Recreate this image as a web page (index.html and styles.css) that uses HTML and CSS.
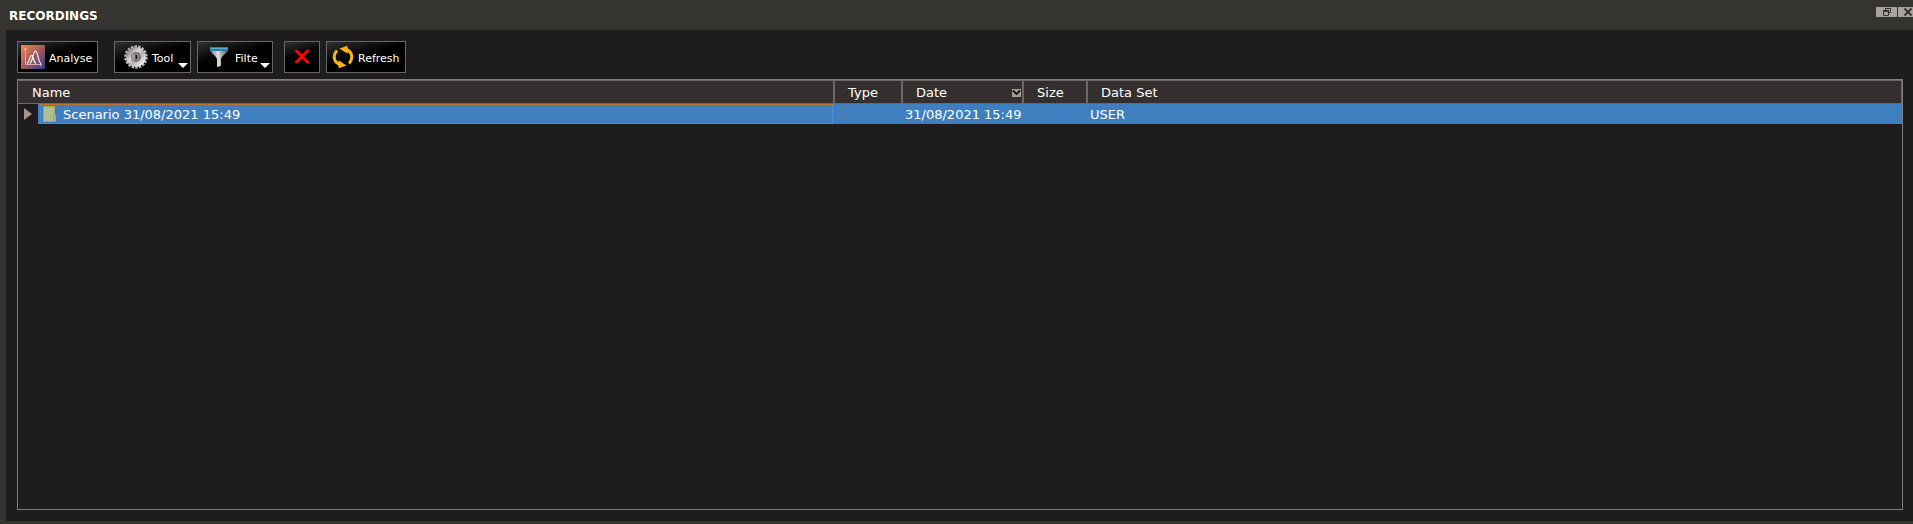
FILE: index.html
```html
<!DOCTYPE html>
<html lang="en">
<head>
<meta charset="utf-8">
<title>Recordings</title>
<link rel="stylesheet" href="styles.css">
</head>
<body>
<section class="dock">
  <header class="titlebar">
    <h1 class="title">RECORDINGS</h1>
    <div class="window-controls">
      <button class="window-btn restore" aria-label="Restore">
        <svg width="21" height="10" viewBox="0 0 21 10"><path d="M9.500 3V1.500h5v4H13" fill="none" stroke="#35322f"/><path d="M9 1h6v1H9z" fill="#35322f"/><path d="M7.500 3.500h5v5h-5z" fill="none" stroke="#35322f"/><path d="M7 3h6v2H7z" fill="#35322f"/></svg>
      </button>
      <button class="window-btn close" aria-label="Close">
        <svg width="15" height="10" viewBox="0 0 15 10"><path d="M6.500 1.500l7 7M13.500 1.500l-7 7" stroke="#35322f" stroke-width="2"/></svg>
      </button>
    </div>
  </header>
  <main class="panel">
    <div class="toolbar">
      <button class="tool analyse">
        <svg width="24" height="24" viewBox="0 0 24 24">
          <defs><linearGradient id="warm" x1="0" y1="0" x2="1" y2="1"><stop offset="0" stop-color="#ff8543"/><stop offset=".5" stop-color="#a35a60"/><stop offset="1" stop-color="#303a8c"/></linearGradient></defs>
          <path d="M0 0h24v24H0z" fill="url(#warm)"/>
          <path d="M4.500 3.500v16h16M3 5l1.500-2L6 5M19 18l2 1.500-2 1.500" fill="none" stroke="#e8c4bb" stroke-width=".8"/>
          <path d="M6 18.500c3-1 2.500-8 4.500-8s2 7 4.500 8M9 18.500c3-2 3-12.500 5.500-12.500s2.500 11.500 5.500 12.500" fill="none" stroke="#fff" stroke-width="1.100"/>
        </svg>
        <span>Analyse</span>
      </button>
      <button class="tool menu tools">
        <svg width="24" height="24" viewBox="0 0 24 24">
          <defs><linearGradient id="steel" x1="0" y1="0" x2="1" y2="1"><stop offset="0" stop-color="#8a8786"/><stop offset=".35" stop-color="#d8d5d4"/><stop offset=".6" stop-color="#b5b1b0"/><stop offset="1" stop-color="#f4f0f0"/></linearGradient></defs>
          <circle cx="12" cy="12" r="10.500" fill="none" stroke="#bdb9b8" stroke-width="2.400" stroke-dasharray="2.500 1.165"/>
          <circle cx="12" cy="12" r="7" fill="none" stroke="url(#steel)" stroke-width="6"/>
          <circle cx="12" cy="12" r="5" fill="#77706f"/>
          <circle cx="11" cy="12" r="3.700" fill="#9d9795"/>
          <path d="M11.500 9c2.500 1 2.500 5 0 6z" fill="#171414"/>
        </svg>
        <span>Tool</span>
        <i class="arrow"></i>
      </button>
      <button class="tool menu filter">
        <svg width="24" height="24" viewBox="0 0 24 24">
          <defs><linearGradient id="funnel"><stop offset="0" stop-color="#777"/><stop offset=".45" stop-color="#e0e0e0"/><stop offset=".6" stop-color="#b5b5b5"/><stop offset="1" stop-color="#555"/></linearGradient></defs>
          <path d="M3 4h18c0 4-6 6.500-7 10v7l-4 1v-8C9 10.500 3 8 3 4z" fill="url(#funnel)"/>
          <path d="M3 3h18v3H3z" fill="#2583ad"/><path d="M3 3h18" stroke="#9bd5e8"/>
        </svg>
        <span>Filte</span>
        <i class="arrow"></i>
      </button>
      <button class="tool delete" aria-label="Delete">
        <svg width="16" height="16" viewBox="0 0 16 16"><path d="M2.500 2l11 11M13.500 2l-11 11" stroke="#f00" stroke-width="3" stroke-linecap="round"/></svg>
      </button>
      <button class="tool refresh">
        <svg width="22" height="24" viewBox="0 0 22 24"><defs><g id="turn"><path d="M14 4.500C20.500 6.500 21.500 14 17 18.500" fill="none" stroke="#fdb515" stroke-width="3"/><path d="M7.500 3.500L15.500.8v8z" fill="#fdb515"/></g></defs><use href="#turn"/><use href="#turn" transform="rotate(180 11 12)"/></svg>
        <span>Refresh</span>
      </button>
    </div>
    <div class="frame">
      <table class="list">
        <colgroup><col class="c-toggle"><col class="c-name"><col class="c-type"><col class="c-date"><col class="c-size"><col></colgroup>
        <thead>
          <tr><th class="first" colspan="2">Name</th><th>Type</th><th><div class="sorted">Date<svg width="9" height="8" viewBox="0 0 9 8"><path d="M0 0h9v8H0z" fill="#a39d94"/><path d="M1 1.500l3.500 3.500L8 1.500" fill="none" stroke="#111" stroke-width="1.800"/></svg></div></th><th>Size</th><th>Data Set</th></tr>
        </thead>
        <tbody>
          <tr>
            <td class="toggle"><button class="expand" aria-label="Expand"></button></td>
            <td class="name"><div class="focus"><svg width="13" height="16" viewBox="0 0 13 16"><path d="M.5.500h11v8h1v7H.5z" fill="#afbd94" stroke="#a1a75f"/><path d="M10.500 15V9.500h1" fill="none" stroke="#a1a75f"/></svg><span>Scenario 31/08/2021 15:49</span></div></td>
            <td></td><td>31/08/2021 15:49</td><td></td><td>USER</td>
          </tr>
        </tbody>
      </table>
    </div>
  </main>
</section>
</body>
</html>
```
FILE: styles.css
```css
* { box-sizing: border-box; }
body {
  margin: 0;
  background: #353431;
  color: #fff;
  font: 13px/16px Verdana, "DejaVu Sans", sans-serif;
}
button { margin: 0; padding: 0; border: 0; font: inherit; color: inherit; }
svg { display: block; flex: none; }
.dock { display: flex; flex-direction: column; height: 100vh; padding: 0 0 3px 6px; }
.titlebar { display: flex; flex: none; height: 30px; justify-content: space-between; margin-left: -6px; padding-left: 9px; }
.title { margin: 8px 0 0; font-size: 12px; line-height: 16px; }
.window-controls { display: flex; gap: 1px; margin-top: 7px; height: 10px; }
.window-btn { background: #a6a3a1; }
.panel { display: flex; flex: 1; flex-direction: column; min-height: 0; padding: 11px 10px 11px 11px; background: #1e1c1d; }
.toolbar { display: flex; flex: none; height: 32px; margin-bottom: 6px; }
.tool {
  position: relative;
  display: flex;
  align-items: center;
  gap: 4px;
  padding: 0 3px;
  border: 1px solid #686666;
  background: linear-gradient(165deg, #303030 0, #000 45%);
  font-size: 11px;
}
.tool span { padding-top: 4px; }
.analyse { width: 81px; margin-right: 16px; }
.menu { width: 77px; margin-right: 6px; padding-left: 9px; }
.filter { width: 76px; margin-right: 11px; }
.delete { width: 36px; margin-right: 6px; justify-content: center; }
.refresh { width: 80px; padding-left: 5px; }
.arrow {
  position: absolute;
  right: 2px;
  bottom: 4px;
  border: 5px solid transparent;
  border-top-color: #fff;
  border-bottom: 0;
}
.frame { flex: 1; min-height: 0; border: 1px solid #7f7d80; }
.list { width: 100%; table-layout: fixed; border-collapse: separate; border-spacing: 0; }
.c-toggle { width: 20px; }
.c-name { width: 797px; }
.c-type { width: 68px; }
.c-date { width: 121px; }
.c-size { width: 64px; }
.list th {
  height: 24px;
  padding: 1px 1px 0 13px;
  border: solid #6b6867;
  border-width: 1px 2px 1px 0;
  background: #342f2e;
  font-weight: 400;
  text-align: left;
}
.list .first { padding-left: 14px; }
.list th:last-child { border-right-width: 1px; }
.sorted { display: flex; align-items: center; justify-content: space-between; }
.list td { height: 20px; padding: 2px 0 0 2px; background: #3f7fbf; white-space: nowrap; }
.list .toggle { padding: 0 0 0 6px; background: none; }
.expand {
  display: block;
  border: 6px solid transparent;
  border-left: 8px solid #a4948c;
  border-right: 0;
  background: none;
}
.list .name { padding: 0 2px; }
.focus { display: flex; gap: 7px; align-items: center; height: 20px; padding-left: 2px; border: 1px dotted #c9803f; }
.focus span { padding-top: 2px; }
```
